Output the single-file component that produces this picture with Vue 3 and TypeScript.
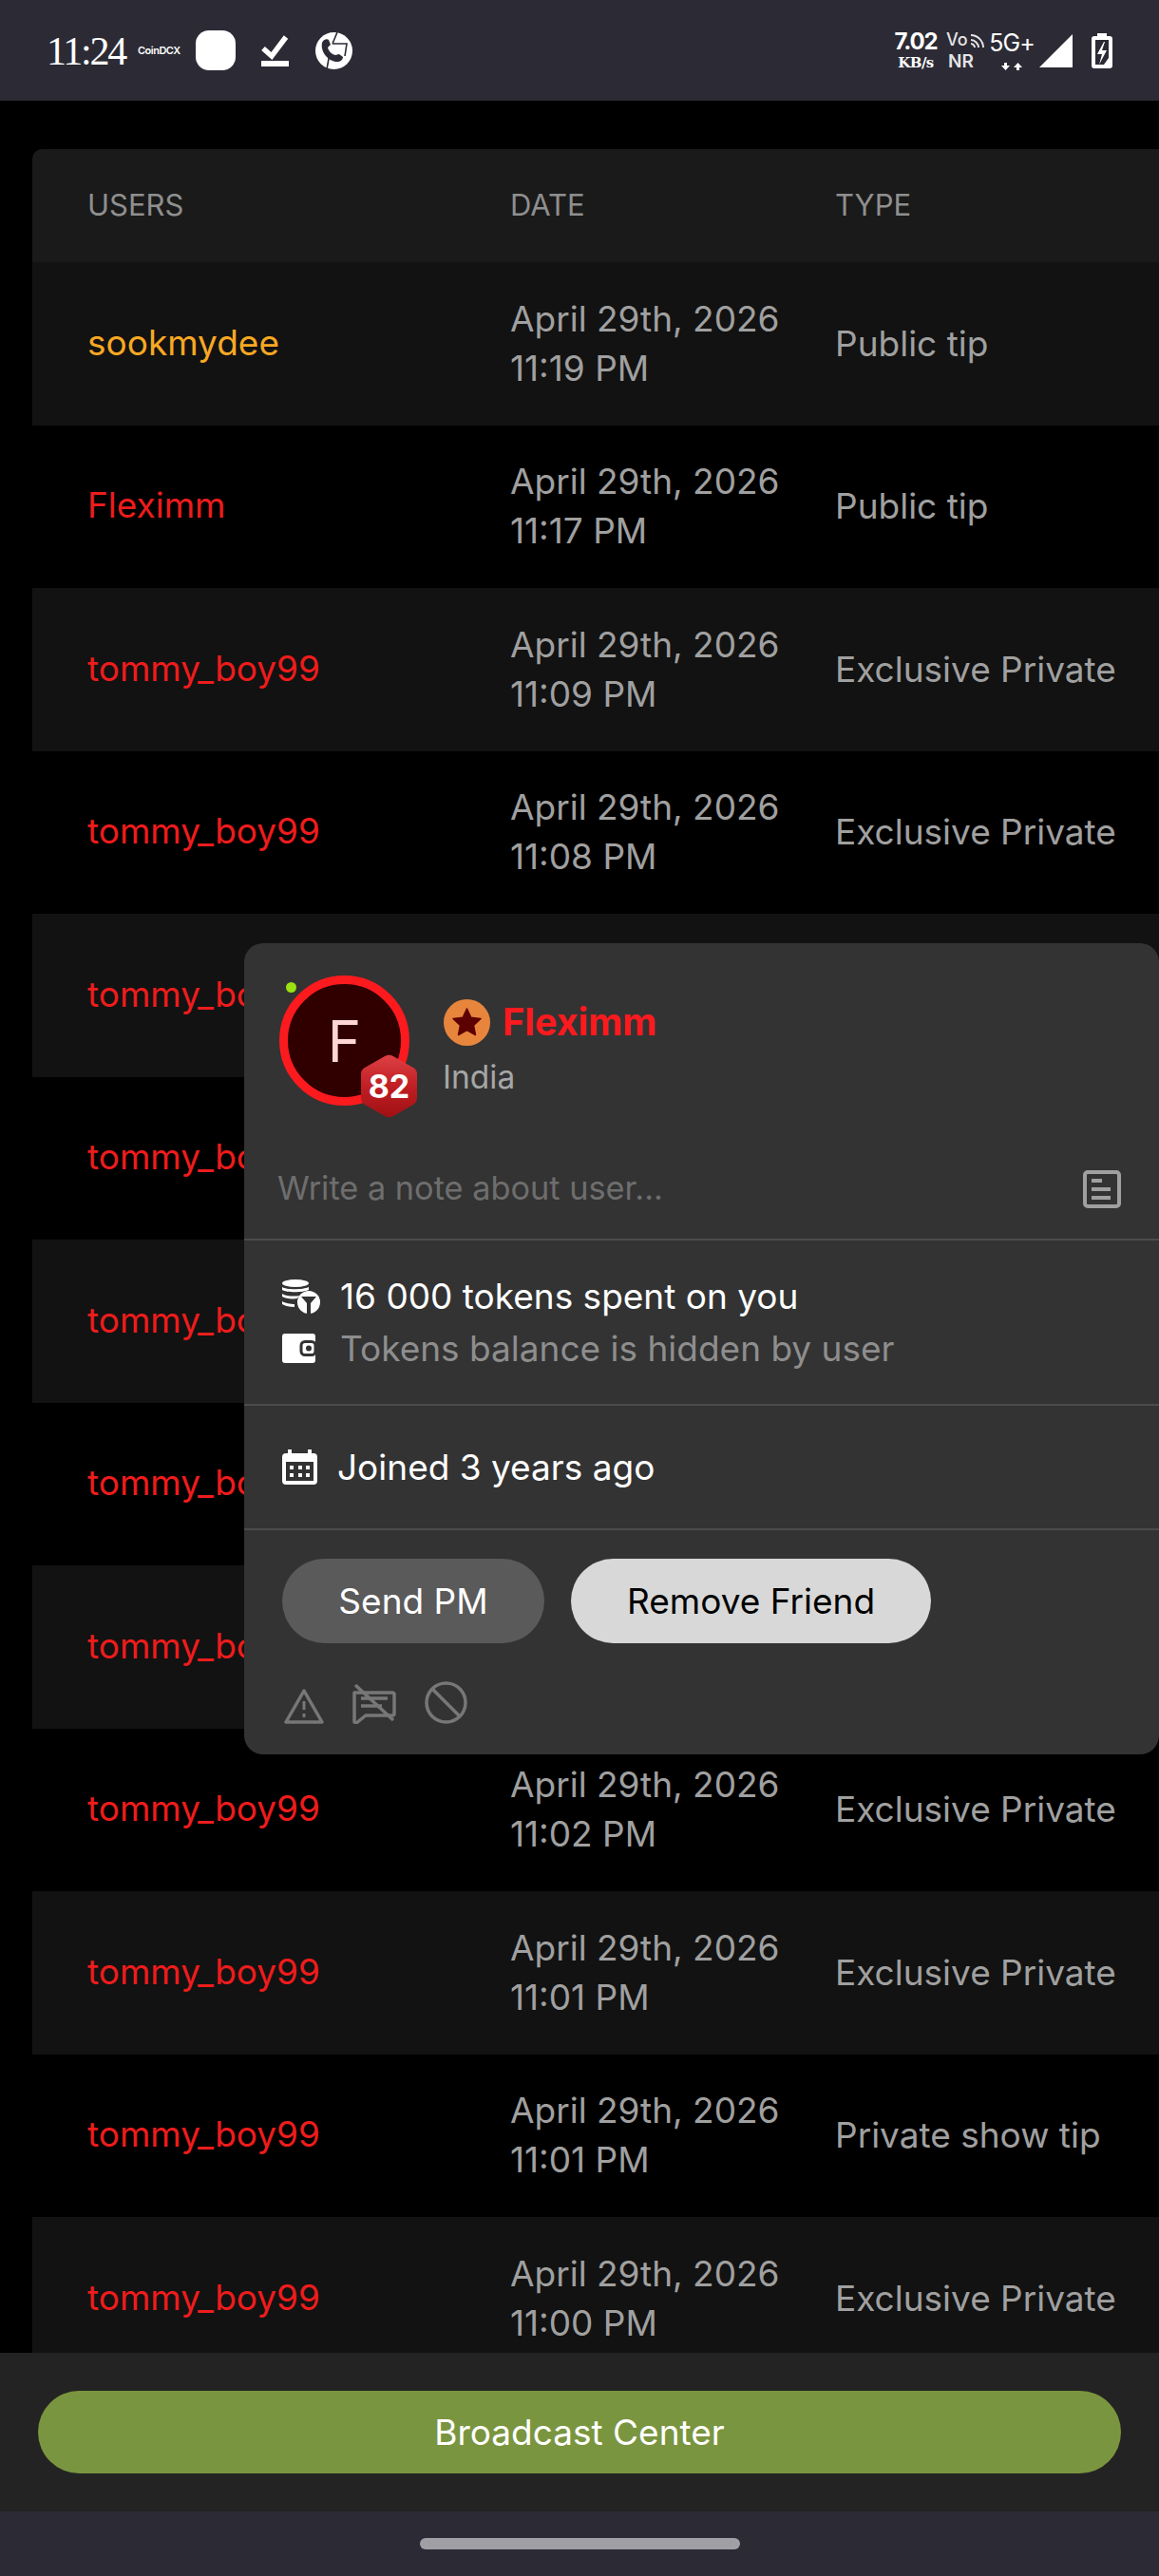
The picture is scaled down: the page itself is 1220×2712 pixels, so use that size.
<script setup lang="ts">
interface TipRow {
  user: string
  day: string
  time: string
  type: string
  tone: 'gold' | 'red'
}

const tommy = (time: string, type = 'Exclusive Private'): TipRow => ({
  user: 'tommy_boy99',
  day: 'April 29th, 2026',
  time,
  type,
  tone: 'red',
})

const rows: TipRow[] = [
  { user: 'sookmydee', day: 'April 29th, 2026', time: '11:19 PM', type: 'Public tip', tone: 'gold' },
  { user: 'Fleximm', day: 'April 29th, 2026', time: '11:17 PM', type: 'Public tip', tone: 'red' },
  tommy('11:09 PM'),
  tommy('11:08 PM'),
  tommy('11:07 PM'),
  tommy('11:06 PM'),
  tommy('11:05 PM'),
  tommy('11:04 PM'),
  tommy('11:03 PM'),
  tommy('11:02 PM'),
  tommy('11:01 PM'),
  tommy('11:01 PM', 'Private show tip'),
  tommy('11:00 PM'),
]
</script>

<template>
  <div class="screen">
    <header class="status">
      <div class="status-left">
        <span class="clock">11:24</span>
        <span class="coindcx">CoinDCX</span>
        <span class="app-square"></span>
        <svg class="check" width="29" height="34" viewBox="0 0 29 34">
          <path d="M2 15l9 8L26 3" fill="none" stroke="#fff" stroke-width="5.5" />
          <rect y="28" width="29" height="6" fill="#fff" />
        </svg>
        <svg class="phone" width="39" height="39" viewBox="0 0 39 39">
          <circle cx="19.5" cy="19.5" r="19.5" fill="#fff" />
          <path d="M23 0l-5 12M14.500 25l-2.500 14" stroke="#2c2b35" stroke-width="1.6" />
          <path d="M18 12h15l-2 13" fill="none" stroke="#2c2b35" stroke-width="1.6" />
          <path d="M7 11c1-3 5-5 7-3l2 5-3 3c1 4 4 7 8 8l4-1 4 3c0 3-3 5-6 5C14 31 5 21 7 11z" fill="#2c2b35" />
        </svg>
      </div>
      <div class="status-right">
        <div class="speed">
          <span class="speed-num">7.02</span>
          <span class="speed-unit">KB/s</span>
        </div>
        <div class="vonr">
          <span class="vo">Vo<svg width="15" height="15" viewBox="0 0 15 15">
            <path d="M1 1c7 0 13 6 13 13M1 6c4 0 8 4 8 8M1 10c2 0 4 2 4 4" fill="none" stroke="#e4e4e6" stroke-width="2" />
          </svg></span>
          <span class="nr">NR</span>
        </div>
        <div class="net">
          <span class="net-label">5G+</span>
          <svg width="24" height="8" viewBox="0 0 24 8">
            <path d="M4 0h3v3h3L5.5 8 1 3h3zM17 8h3V5h3L18.500 0 14 5h3z" fill="#fff" />
          </svg>
        </div>
        <svg class="signal" width="35" height="35" viewBox="0 0 35 35">
          <path d="M35 0v35H0z" fill="#fff" />
        </svg>
        <svg class="battery" width="22" height="37" viewBox="0 0 22 37">
          <path d="M6 0h10v3h3a3 3 0 0 1 3 3v28a3 3 0 0 1-3 3H3a3 3 0 0 1-3-3V6a3 3 0 0 1 3-3h3z" fill="#fff" />
          <path d="M4 7h14v19l-5 7H4z" fill="#2c2b35" />
          <path d="M13 9l-7 13h5l-3 11 8-15h-5l3-9z" fill="#fff" />
        </svg>
      </div>
    </header>

    <main class="content">
      <section class="table">
        <div class="head">
          <span>USERS</span>
          <span>DATE</span>
          <span>TYPE</span>
        </div>
        <div v-for="(row, i) in rows" :key="i" class="row">
          <span :class="['user', row.tone]">{{ row.user }}</span>
          <span class="date">{{ row.day }}<br />{{ row.time }}</span>
          <span class="type">{{ row.type }}</span>
        </div>
      </section>

      <aside class="card">
        <div class="profile">
          <div class="avatar-wrap">
            <span class="online"></span>
            <div class="avatar">F</div>
            <svg class="level" width="61" height="67" viewBox="0 0 61 67">
              <defs>
                <linearGradient id="hex" x1="0" y1="0" x2="0" y2="1">
                  <stop offset="0" stop-color="#de4044" />
                  <stop offset="0.500" stop-color="#c01f24" />
                  <stop offset="1" stop-color="#a01014" />
                </linearGradient>
              </defs>
              <path
                d="M26 2a9 9 0 0 1 9 0l21 12a8 8 0 0 1 4 7v25a8 8 0 0 1-4 7L35 65a9 9 0 0 1-9 0L5 53a8 8 0 0 1-4-7V21a8 8 0 0 1 4-7z"
                fill="url(#hex)"
              />
            </svg>
            <span class="level-num">82</span>
          </div>
          <div class="who">
            <div class="name-line">
              <svg width="49" height="49" viewBox="0 0 49 49">
                <circle cx="24.500" cy="24.500" r="24.500" fill="#e8853d" />
                <path
                  d="M24.500 10l4.300 9.300 10.200 1.200-7.500 7 2 10-9-5-9 5 2-10-7.500-7 10.200-1.200z"
                  fill="#5c0000"
                  stroke="#5c0000"
                  stroke-width="1.500"
                  stroke-linejoin="round"
                />
              </svg>
              <span class="name">Fleximm</span>
            </div>
            <div class="country">India</div>
          </div>
        </div>

        <div class="note">
          <span class="note-text">Write a note about user...</span>
          <svg width="40" height="40" viewBox="0 0 40 40">
            <rect x="2" y="2" width="36" height="36" rx="3" fill="none" stroke="#a0a0a0" stroke-width="4" />
            <path d="M9 9h11v4H9zM9 18h20v4H9zM9 27h20v4H9z" fill="#a0a0a0" />
          </svg>
        </div>

        <div class="tokens">
          <div class="info-line">
            <span class="icon-slot">
              <svg width="40" height="36" viewBox="0 0 40 36">
                <ellipse cx="14" cy="4" rx="14" ry="4" fill="#fff" />
                <path d="M0 8c4 3 22 3 28 0v3c-6 3-24 3-28 0zM0 15c4 3 14 3 18 2l-2 3c-6 1-13 0-16-2zM0 23c3 2 9 3 13 3v3c-5 0-10-1-13-3z" fill="#fff" />
                <circle cx="28" cy="24" r="12" fill="#fff" />
                <path d="M20 18h16l-6 7v11h-4V25z" fill="#333" />
              </svg>
            </span>
            <span class="spent">16 000 tokens spent on you</span>
          </div>
          <div class="info-line">
            <span class="icon-slot">
              <svg width="36" height="31" viewBox="0 0 36 31">
                <rect width="35" height="31" rx="3" fill="#fff" />
                <rect x="20" y="8.500" width="15" height="14" rx="4" fill="#fff" stroke="#333" stroke-width="3" />
                <circle cx="28" cy="15.500" r="3" fill="#333" />
              </svg>
            </span>
            <span class="hidden-note">Tokens balance is hidden by user</span>
          </div>
        </div>

        <div class="joined">
          <svg width="37" height="37" viewBox="0 0 37 37">
            <path d="M6 0h4v4h17V0h4v4h2a4 4 0 0 1 4 4v25a4 4 0 0 1-4 4H4a4 4 0 0 1-4-4V8a4 4 0 0 1 4-4h2z" fill="#fff" />
            <rect x="4" y="13" width="29" height="20" fill="#333" />
            <path d="M8 17h4v4H8zM17 17h4v4h-4zM25 17h4v4h-4zM8 25h4v4H8zM17 25h4v4h-4zM25 25h4v4h-4z" fill="#fff" />
          </svg>
          <span class="joined-text">Joined 3 years ago</span>
        </div>

        <div class="actions">
          <button class="btn btn-dark" type="button">Send PM</button>
          <button class="btn btn-light" type="button">Remove Friend</button>
        </div>

        <div class="tools">
          <svg width="42" height="38" viewBox="0 0 42 38">
            <path d="M21 3L2 36h38z" fill="none" stroke="#777" stroke-width="3.500" stroke-linejoin="round" />
            <path d="M19.500 14h3v9h-3zM19.500 27h3v4h-3z" fill="#777" />
          </svg>
          <svg width="46" height="42" viewBox="0 0 46 42">
            <path d="M2 9h40a2 2 0 0 1 2 2v20a2 2 0 0 1-2 2H14l-10 8-2-1z" fill="none" stroke="#777" stroke-width="3.500" stroke-linejoin="round" />
            <path d="M9 15h28M9 23h22" stroke="#777" stroke-width="3.500" />
            <path d="M3 1l40 37" stroke="#777" stroke-width="3.500" />
          </svg>
          <svg width="45" height="45" viewBox="0 0 45 45">
            <circle cx="22.500" cy="22.500" r="20.500" fill="none" stroke="#777" stroke-width="3.500" />
            <path d="M8 8l29 29" stroke="#777" stroke-width="3.500" />
          </svg>
        </div>
      </aside>
    </main>

    <footer class="footer">
      <button class="broadcast" type="button">Broadcast Center</button>
    </footer>
    <nav class="nav-bar">
      <span class="home-pill"></span>
    </nav>
  </div>
</template>

<style>
html,
body {
  margin: 0;
  background: #000;
}
</style>

<style scoped>
.screen {
  width: 1220px;
  height: 2712px;
  display: flex;
  flex-direction: column;
  overflow: hidden;
  font-family: Inter, 'Noto Sans', sans-serif;
  background: #000;
}

.status {
  height: 106px;
  flex: none;
  background: #2c2b35;
  display: flex;
  align-items: center;
  justify-content: space-between;
  padding: 0 49px 0 49px;
  color: #fff;
}

.status-left,
.status-right {
  display: flex;
  align-items: center;
}

.clock {
  font-family: 'Liberation Serif', serif;
  font-size: 42px;
  letter-spacing: -2.200px;
  width: 83px;
  margin-top: 2px;
}

.coindcx {
  font-size: 11px;
  font-weight: 600;
  letter-spacing: -0.500px;
  margin-left: 13px;
  width: 38px;
}

.app-square {
  width: 42px;
  height: 42px;
  border-radius: 14px;
  background: #fff;
  margin-left: 23px;
}

.check {
  margin-left: 27px;
}

.phone {
  margin-left: 28px;
}

.speed {
  display: flex;
  flex-direction: column;
  align-items: center;
  width: 46px;
  line-height: 1;
}

.speed-num {
  font-size: 24px;
  font-weight: 700;
  letter-spacing: -1.200px;
}

.speed-unit {
  font-family: 'DejaVu Serif', serif;
  font-size: 15px;
  font-weight: 700;
  letter-spacing: -0.500px;
  margin-top: 3px;
}

.vonr {
  display: flex;
  flex-direction: column;
  align-items: flex-start;
  margin-left: 9px;
  width: 40px;
  color: #e4e4e6;
  line-height: 1;
}

.vo {
  font-size: 18px;
  font-weight: 500;
  display: flex;
  align-items: flex-end;
  gap: 2px;
}

.nr {
  font-size: 19px;
  font-weight: 600;
  margin: 4px 0 0 2px;
}

.net {
  display: flex;
  flex-direction: column;
  align-items: center;
  width: 44px;
  margin-left: 7px;
  line-height: 1;
}

.net-label {
  font-size: 25px;
  font-weight: 400;
  letter-spacing: -1px;
  margin-bottom: 8px;
}

.signal {
  margin-left: 7px;
}

.battery {
  margin-left: 20px;
}

.content {
  flex: 1;
  min-height: 0;
  position: relative;
  overflow: hidden;
  padding-top: 51px;
}

.table {
  margin-left: 34px;
  width: 1300px;
  border-top-left-radius: 10px;
  overflow: hidden;
}

.head,
.row {
  display: grid;
  grid-template-columns: 445px 342px 1fr;
  padding-left: 58px;
  align-items: center;
}

.head {
  height: 119px;
  background: #1a1a1a;
  color: #8f8f8f;
  font-size: 31px;
  padding-bottom: 2px;
  box-sizing: border-box;
}

.row {
  height: 171.500px;
  font-size: 37px;
  line-height: 52px;
}

.row:nth-child(even) {
  background: #121212;
}

.user {
  margin-top: -2px;
}

.user.gold {
  color: #f7a823;
}

.user.red {
  color: #ee1c1c;
}

.date,
.type {
  color: #a0a0a0;
}

.card {
  position: absolute;
  left: 257px;
  top: 887px;
  width: 963px;
  box-sizing: border-box;
  background: #333;
  border-radius: 20px;
  padding-bottom: 32px;
}

.profile {
  display: flex;
  height: 207px;
  box-sizing: border-box;
  padding: 34px 0 0 37px;
}

.avatar-wrap {
  position: relative;
  width: 137px;
  height: 137px;
}

.online {
  position: absolute;
  left: 7px;
  top: 7px;
  width: 11px;
  height: 11px;
  border-radius: 50%;
  background: #9be012;
}

.avatar {
  width: 137px;
  height: 137px;
  box-sizing: border-box;
  border: 9px solid #fb1a1e;
  border-radius: 50%;
  background: #300000;
  color: #ffd6d6;
  font-size: 60px;
  display: flex;
  align-items: center;
  justify-content: center;
}

.level {
  position: absolute;
  left: 85px;
  top: 83px;
}

.level-num {
  position: absolute;
  left: 85px;
  top: 83px;
  width: 61px;
  height: 67px;
  display: flex;
  align-items: center;
  justify-content: center;
  color: #fff;
  font-size: 34px;
  font-weight: 700;
}

.who {
  margin: 25px 0 0 36px;
}

.name-line {
  display: flex;
  align-items: center;
  gap: 13px;
}

.name {
  color: #fb1a1e;
  font-size: 39.500px;
  font-weight: 700;
  margin-top: -2px;
}

.country {
  color: #a6a6a6;
  font-size: 33.500px;
  margin: 13px 0 0 -1px;
}

.note {
  height: 106px;
  box-sizing: border-box;
  display: flex;
  align-items: center;
  justify-content: space-between;
  padding: 0 40px 0 35px;
  border-bottom: 2px solid #4c4c4c;
}

.note-text {
  color: #6e6e6e;
  font-size: 34.300px;
  margin-top: -4px;
}

.tokens {
  height: 174px;
  box-sizing: border-box;
  border-bottom: 2px solid #4c4c4c;
  padding-left: 40px;
  display: flex;
  flex-direction: column;
  justify-content: center;
  gap: 11px;
  font-size: 37px;
  line-height: 44px;
}

.info-line {
  display: flex;
  align-items: center;
}

.icon-slot {
  width: 61px;
  display: flex;
  flex: none;
}

.spent {
  color: #fff;
}

.hidden-note {
  color: #8e8e8e;
}

.joined {
  height: 131px;
  box-sizing: border-box;
  border-bottom: 2px solid #4c4c4c;
  padding-left: 40px;
  display: flex;
  align-items: center;
  gap: 21px;
}

.joined-text {
  color: #fff;
  font-size: 37px;
}

.actions {
  display: flex;
  gap: 28px;
  padding: 30px 0 0 40px;
}

.btn {
  height: 89px;
  border: none;
  border-radius: 45px;
  font-family: inherit;
  font-size: 37px;
  padding: 0;
}

.btn-dark {
  width: 276px;
  background: #5a5a5a;
  color: #fff;
}

.btn-light {
  width: 379px;
  background: #d8d8d8;
  color: #000;
}

.tools {
  display: flex;
  align-items: flex-end;
  padding: 40px 0 0 42px;
  gap: 30px;
}

.footer {
  height: 167px;
  flex: none;
  box-sizing: border-box;
  background: #232323;
  padding: 40px 40px 0;
}

.broadcast {
  display: block;
  width: 100%;
  height: 87px;
  border: none;
  border-radius: 44px;
  background: #7a953f;
  color: #fff;
  font-family: inherit;
  font-size: 37px;
  padding: 0;
}

.nav-bar {
  height: 68px;
  flex: none;
  background: #2c2b35;
  display: flex;
  justify-content: center;
  padding-top: 28px;
  box-sizing: border-box;
}

.home-pill {
  width: 337px;
  height: 12px;
  border-radius: 6px;
  background: #a09fa6;
}
</style>
